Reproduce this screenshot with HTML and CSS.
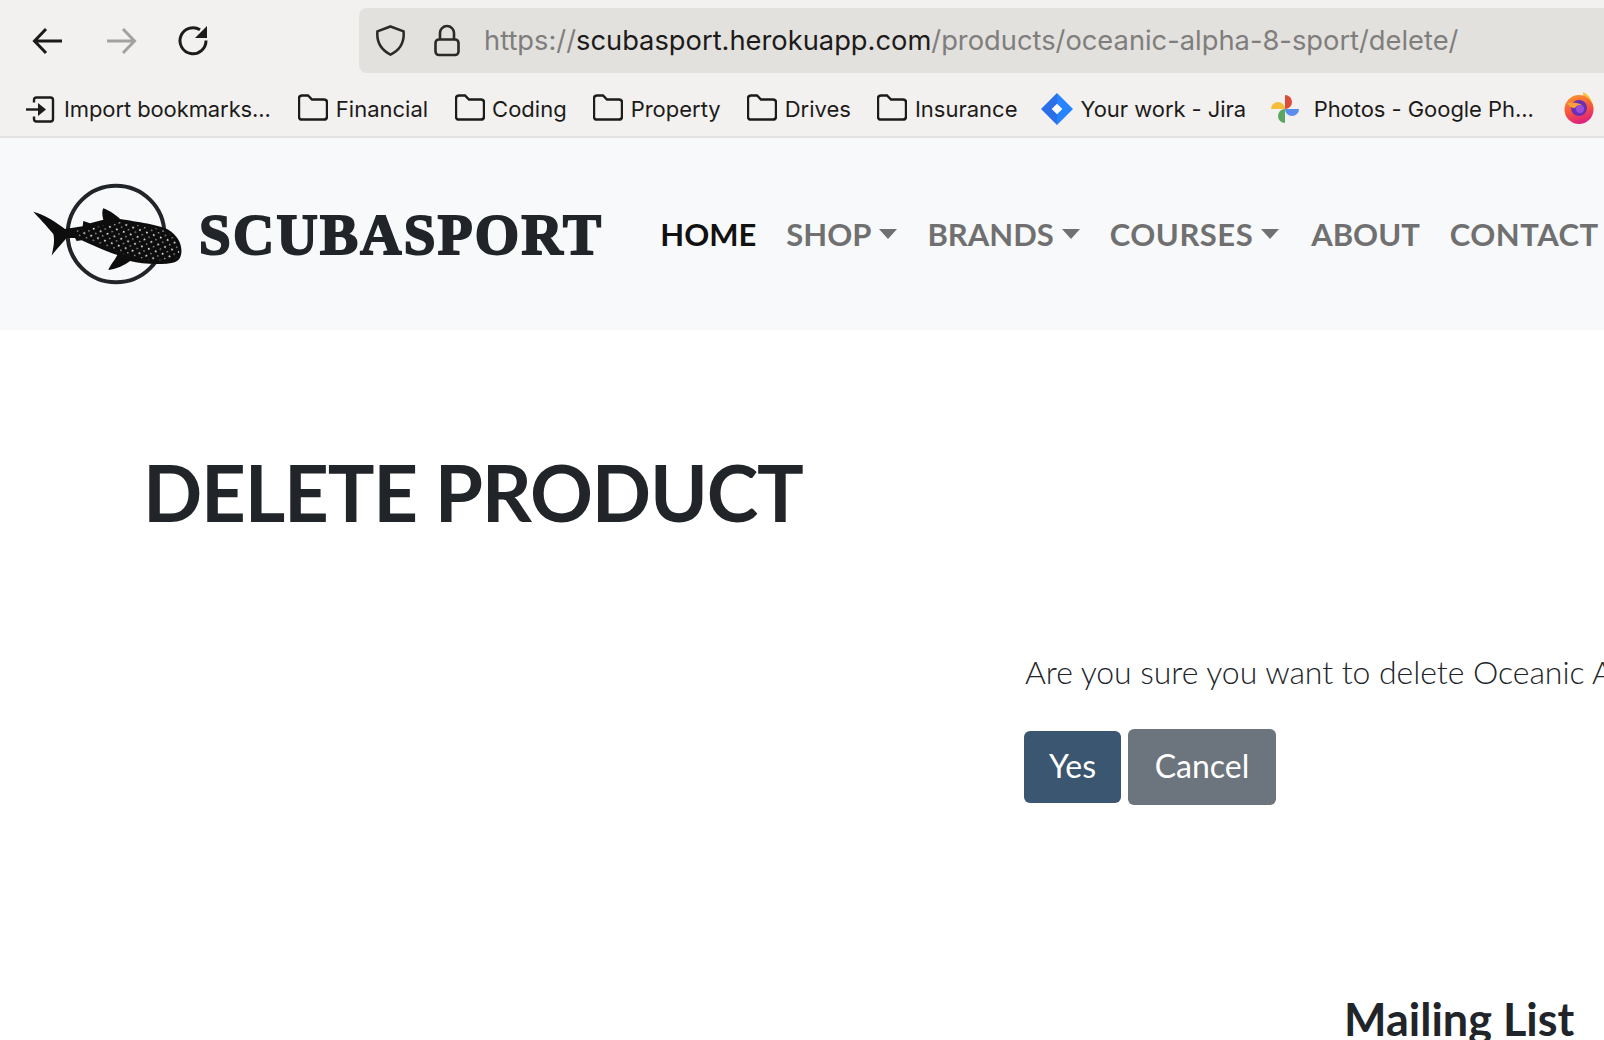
FILE: index.html
```html
<!DOCTYPE html>
<html lang="en">
<head>
    <meta charset="UTF-8">
    <meta name="viewport" content="width=device-width, initial-scale=1.0">
    <title>Delete Product - Scubasport</title>
    <link rel="stylesheet" href="styles.css">
</head>
<body>
    <!-- Browser chrome -->
    <div class="toolbar">
        <div class="toolbar-buttons">
            <svg class="tool-icon" viewBox="0 0 32 32"><path d="M30 16H3M14 4 2.500 16 14 28"/></svg>
            <svg class="tool-icon tool-icon-off" viewBox="0 0 32 32"><path d="M2 16h27M18 4l11.500 12L18 28"/></svg>
            <svg class="tool-icon" viewBox="0 0 32 32"><path d="M28 15.500A13 13 0 1 1 22 4.800"/><path class="solid" d="M29 1v12H17z"/></svg>
        </div>
        <div class="urlbar">
            <svg class="url-icon" viewBox="0 0 32 32"><path d="M16 1.500 29.500 6.500c1 11-3 19-13.500 24C6 25.500 1.500 17.500 2.500 6.500z"/></svg>
            <svg class="url-icon url-lock" viewBox="0 0 26 32"><rect x="1.500" y="15" width="23" height="15.500" rx="3.500"/><path d="M6 15V8.500a7 7 0 0 1 14 0V15"/></svg>
            <div class="url-text">https://<span class="url-host">scubasport.herokuapp.com</span>/products/oceanic-alpha-8-sport/delete/</div>
        </div>
    </div>
    <div class="bookmarks">
        <div class="bookmark bookmark-import">
            <svg class="mark-icon" viewBox="0 0 30 26"><path d="M9 6V3.500C9 2 10 1 11.500 1h14C27 1 28 2 28 3.500v19c0 1.500-1 2.500-2.500 2.500h-14C10 25 9 24 9 22.500V20"/><path d="M1 13h12"/><path class="solid" d="M13 6.500 21 13l-8 6.500z"/></svg>
            Import bookmarks...
        </div>
        <div class="bookmark"><svg class="mark-icon mark-folder" viewBox="0 0 30 26"><path d="M1 4c0-1.700 1-3 3-3h6l4 4h12c2 0 3 1 3 3v14c0 2-1 3-3 3H4c-2 0-3-1-3-3z"/></svg>Financial</div>
        <div class="bookmark"><svg class="mark-icon mark-folder" viewBox="0 0 30 26"><path d="M1 4c0-1.700 1-3 3-3h6l4 4h12c2 0 3 1 3 3v14c0 2-1 3-3 3H4c-2 0-3-1-3-3z"/></svg>Coding</div>
        <div class="bookmark"><svg class="mark-icon mark-folder" viewBox="0 0 30 26"><path d="M1 4c0-1.700 1-3 3-3h6l4 4h12c2 0 3 1 3 3v14c0 2-1 3-3 3H4c-2 0-3-1-3-3z"/></svg>Property</div>
        <div class="bookmark"><svg class="mark-icon mark-folder" viewBox="0 0 30 26"><path d="M1 4c0-1.700 1-3 3-3h6l4 4h12c2 0 3 1 3 3v14c0 2-1 3-3 3H4c-2 0-3-1-3-3z"/></svg>Drives</div>
        <div class="bookmark"><svg class="mark-icon mark-folder" viewBox="0 0 30 26"><path d="M1 4c0-1.700 1-3 3-3h6l4 4h12c2 0 3 1 3 3v14c0 2-1 3-3 3H4c-2 0-3-1-3-3z"/></svg>Insurance</div>
        <div class="bookmark bookmark-jira">
            <svg class="mark-color" viewBox="0 0 30 30">
                <path fill="#2684ff" d="M15 0 30 15 15 30z"/>
                <path fill="#2a6fe8" d="M15 0 0 15 15 30z"/>
                <path fill="#fff" d="M15 10l5 5-5 5-5-5z"/>
            </svg>
            Your work - Jira
        </div>
        <div class="bookmark bookmark-photos">
            <svg class="mark-color" viewBox="0 0 30 30">
                <path fill="#dd4b39" d="M15 15V1a7 7 0 0 1 0 14z"/>
                <path fill="#5b8def" d="M15 15h14a7 7 0 0 1-14 0z"/>
                <path fill="#5aa85f" d="M15 15v14a7 7 0 0 1 0-14z"/>
                <path fill="#f4bd3b" d="M15 15H1a7 7 0 0 1 14 0z"/>
            </svg>
            Photos - Google Ph...
        </div>
        <div class="bookmark bookmark-fox">
            <svg class="mark-color" viewBox="0 0 30 32">
                <defs>
                    <linearGradient id="foxFill" x1="0" y1="0" x2="0.300" y2="1">
                        <stop offset="0" stop-color="#ff9a2e"/>
                        <stop offset="0.600" stop-color="#f4553e"/>
                        <stop offset="1" stop-color="#e0247a"/>
                    </linearGradient>
                </defs>
                <path fill="#fcc22e" d="M19 0c6 3 10 9 10.500 17L20 14z"/>
                <circle cx="15" cy="17.500" r="14.500" fill="url(#foxFill)"/>
                <circle cx="15" cy="16" r="8" fill="#6b2fb5"/>
                <path fill="#f7a13a" d="M3 11c6-1 12 0 15 2-4 0-6 1-7 3-4 0-6-2-8-5z"/>
                <circle cx="16" cy="17" r="4" fill="#9a4fd6"/>
            </svg>
        </div>
    </div>

    <!-- Site nav -->
    <nav class="navbar">
        <div class="brand">
            <svg class="brand-logo" viewBox="30 30 480 330">
                <defs>
                    <pattern id="sharkDots" width="22" height="22" patternUnits="userSpaceOnUse" patternTransform="rotate(20)">
                        <circle cx="5" cy="5" r="2.800" fill="#fff"/>
                        <circle cx="16" cy="16" r="2.200" fill="#ccc"/>
                    </pattern>
                </defs>
                <circle cx="288" cy="195" r="145" fill="none" stroke="#212529" stroke-width="12"/>
                <path fill="#0d0d0d" d="M40 128C70 135 110 160 135 180L188 172 190 156 210 163 250 152C245 135 247 122 250 118 270 125 290 140 300 150 350 158 420 168 445 182 472 198 487 225 484 252 481 274 470 282 440 284 400 287 360 284 330 276 315 288 290 300 265 303 270 290 285 272 292 258 250 245 210 225 185 214L170 216 165 207 140 207C125 225 105 245 95 260 100 235 105 215 100 195 80 170 55 145 40 128Z"/>
                <path fill="url(#sharkDots)" d="M170 185 300 160C350 167 420 177 445 192 470 207 480 235 478 265 430 280 360 275 300 252 250 232 210 212 170 203Z"/>
            </svg>
            <span class="brand-name">SCUBASPORT</span>
        </div>
        <ul class="nav-links">
            <li class="nav-link nav-link-active">HOME</li>
            <li class="nav-link nav-caret">SHOP</li>
            <li class="nav-link nav-caret">BRANDS</li>
            <li class="nav-link nav-caret nav-link-wide">COURSES</li>
            <li class="nav-link nav-link-about">ABOUT</li>
            <li class="nav-link nav-link-wide">CONTACT</li>
        </ul>
    </nav>

    <main class="content">
        <h1 class="page-title">DELETE PRODUCT</h1>
        <div class="confirm">
            <p class="confirm-text">Are you sure you want to delete Oceanic Alpha 8 Sport?</p>
            <div class="confirm-buttons">
                <button type="button" class="btn btn-yes">Yes</button>
                <button type="button" class="btn btn-cancel">Cancel</button>
            </div>
        </div>
        <h2 class="mailing-title">Mailing List</h2>
    </main>
</body>
</html>
```

FILE: styles.css
```css
/* General body styles */
html, body {
    height: 100%;
}
body {
    margin: 0;
    width: 1604px;
    height: 1040px;
    overflow: hidden;
    background: #fff;
    font-family: "Lato", sans-serif;
    color: #212529;
}

/* Browser toolbar */
.toolbar {
    display: flex;
    align-items: flex-start;
    height: 82px;
    box-sizing: border-box;
    padding: 8px 0 0 32px;
    background: #f2f1ef;
}
.toolbar-buttons {
    display: flex;
    align-items: center;
    gap: 41px;
    height: 65px;
    width: 327px;
}
.tool-icon {
    width: 32px;
    height: 32px;
    fill: none;
    stroke: #1c1b1a;
    stroke-width: 3;
}
.tool-icon-off {
    stroke: #a3a2a0;
}
.solid {
    fill: currentColor;
    stroke: none;
    color: #1c1b1a;
}
.urlbar {
    display: flex;
    align-items: center;
    flex: 1;
    height: 65px;
    padding-left: 16px;
    background: #e2e1de;
    border-radius: 8px 0 0 8px;
}
.url-icon {
    width: 31px;
    height: 33px;
    fill: none;
    stroke: #2b2a29;
    stroke-width: 2.600;
}
.url-lock {
    width: 26px;
    margin-left: 28px;
}
.url-text {
    margin-left: 24px;
    font-family: "Inter", sans-serif;
    font-size: 27.300px;
    color: #7f7e7c;
    white-space: nowrap;
}
.url-host {
    color: #1c1b1a;
}

/* Bookmarks bar */
.bookmarks {
    display: flex;
    align-items: center;
    gap: 26.500px;
    height: 56px;
    padding-left: 25px;
    box-sizing: border-box;
    background: #f2f1ef;
    border-bottom: 2px solid #e3e2e0;
    font-family: "Inter", sans-serif;
    font-size: 22px;
    color: #1c1b1a;
    white-space: nowrap;
}
.bookmark {
    display: flex;
    align-items: center;
    gap: 7.500px;
}
.bookmark-import {
    gap: 9px;
    margin-right: 1px;
    letter-spacing: -0.100px;
}
.mark-icon {
    width: 30px;
    height: 27px;
    fill: none;
    stroke: #1c1b1a;
    stroke-width: 2.400;
}
.mark-folder {
    margin-top: -3px;
}
.mark-color {
    width: 30px;
    height: 30px;
}
.bookmark-jira {
    margin-left: -3px;
    letter-spacing: -0.050px;
}
.bookmark-jira .mark-color {
    width: 32px;
    height: 32px;
}
.bookmark-photos {
    margin-left: -3px;
    letter-spacing: -0.050px;
}
.bookmark-photos .mark-color {
    margin-right: 6.500px;
}
.bookmark-fox {
    margin-top: -2px;
    margin-left: 4px;
}
.bookmark-fox .mark-color {
    height: 32px;
}

/* Site nav */
.navbar {
    display: flex;
    align-items: center;
    height: 192px;
    padding-left: 30px;
    background: #f8f9fa;
    white-space: nowrap;
}
.brand {
    display: flex;
    align-items: center;
    gap: 9px;
}
.brand-logo {
    width: 160px;
    height: 110px;
}
.brand-name {
    font-family: "Liberation Serif", serif;
    font-weight: 700;
    font-size: 57px;
    letter-spacing: 2.300px;
    -webkit-text-stroke: 2px #212529;
}
.nav-links {
    display: flex;
    gap: 30px;
    margin: 0 0 0 57px;
    padding: 0;
    list-style: none;
}
.nav-link {
    font-size: 31px;
    font-weight: 700;
    color: #707070;
}
.nav-link-active {
    color: #111;
}
.nav-link-wide {
    letter-spacing: 0.500px;
}
.nav-link-about {
    margin-left: 2px;
}
.nav-caret::after {
    content: "";
    display: inline-block;
    margin-left: 8px;
    vertical-align: 7px;
    border-top: 10px solid #707070;
    border-left: 9px solid transparent;
    border-right: 9px solid transparent;
}

/* Main content */
.content {
    padding-top: 114px;
    white-space: nowrap;
}
.page-title {
    margin: 0 0 0 143px;
    font-size: 78px;
    letter-spacing: -1.200px;
    line-height: 96px;
    font-weight: 700;
}
.confirm {
    margin: 108px 0 0 1024px;
}
.confirm-text {
    margin: 0 0 0 1px;
    font-size: 32px;
    letter-spacing: -0.050px;
    font-weight: 300;
    line-height: 48px;
}
.confirm-buttons {
    display: flex;
    align-items: center;
    gap: 7px;
    margin-top: 33px;
}
.btn {
    padding: 0 0 3px;
    font-family: "Lato", sans-serif;
    font-size: 32px;
    font-weight: 400;
    color: #fff;
    border: none;
    border-radius: 6px;
}
.btn-yes {
    width: 97px;
    height: 72px;
    background: #3b5670;
}
.btn-cancel {
    width: 148px;
    height: 76px;
    background: #6c757d;
}
.mailing-title {
    margin: 188px 0 0 1344px;
    font-size: 45px;
    font-weight: 700;
    line-height: 52px;
}
```
